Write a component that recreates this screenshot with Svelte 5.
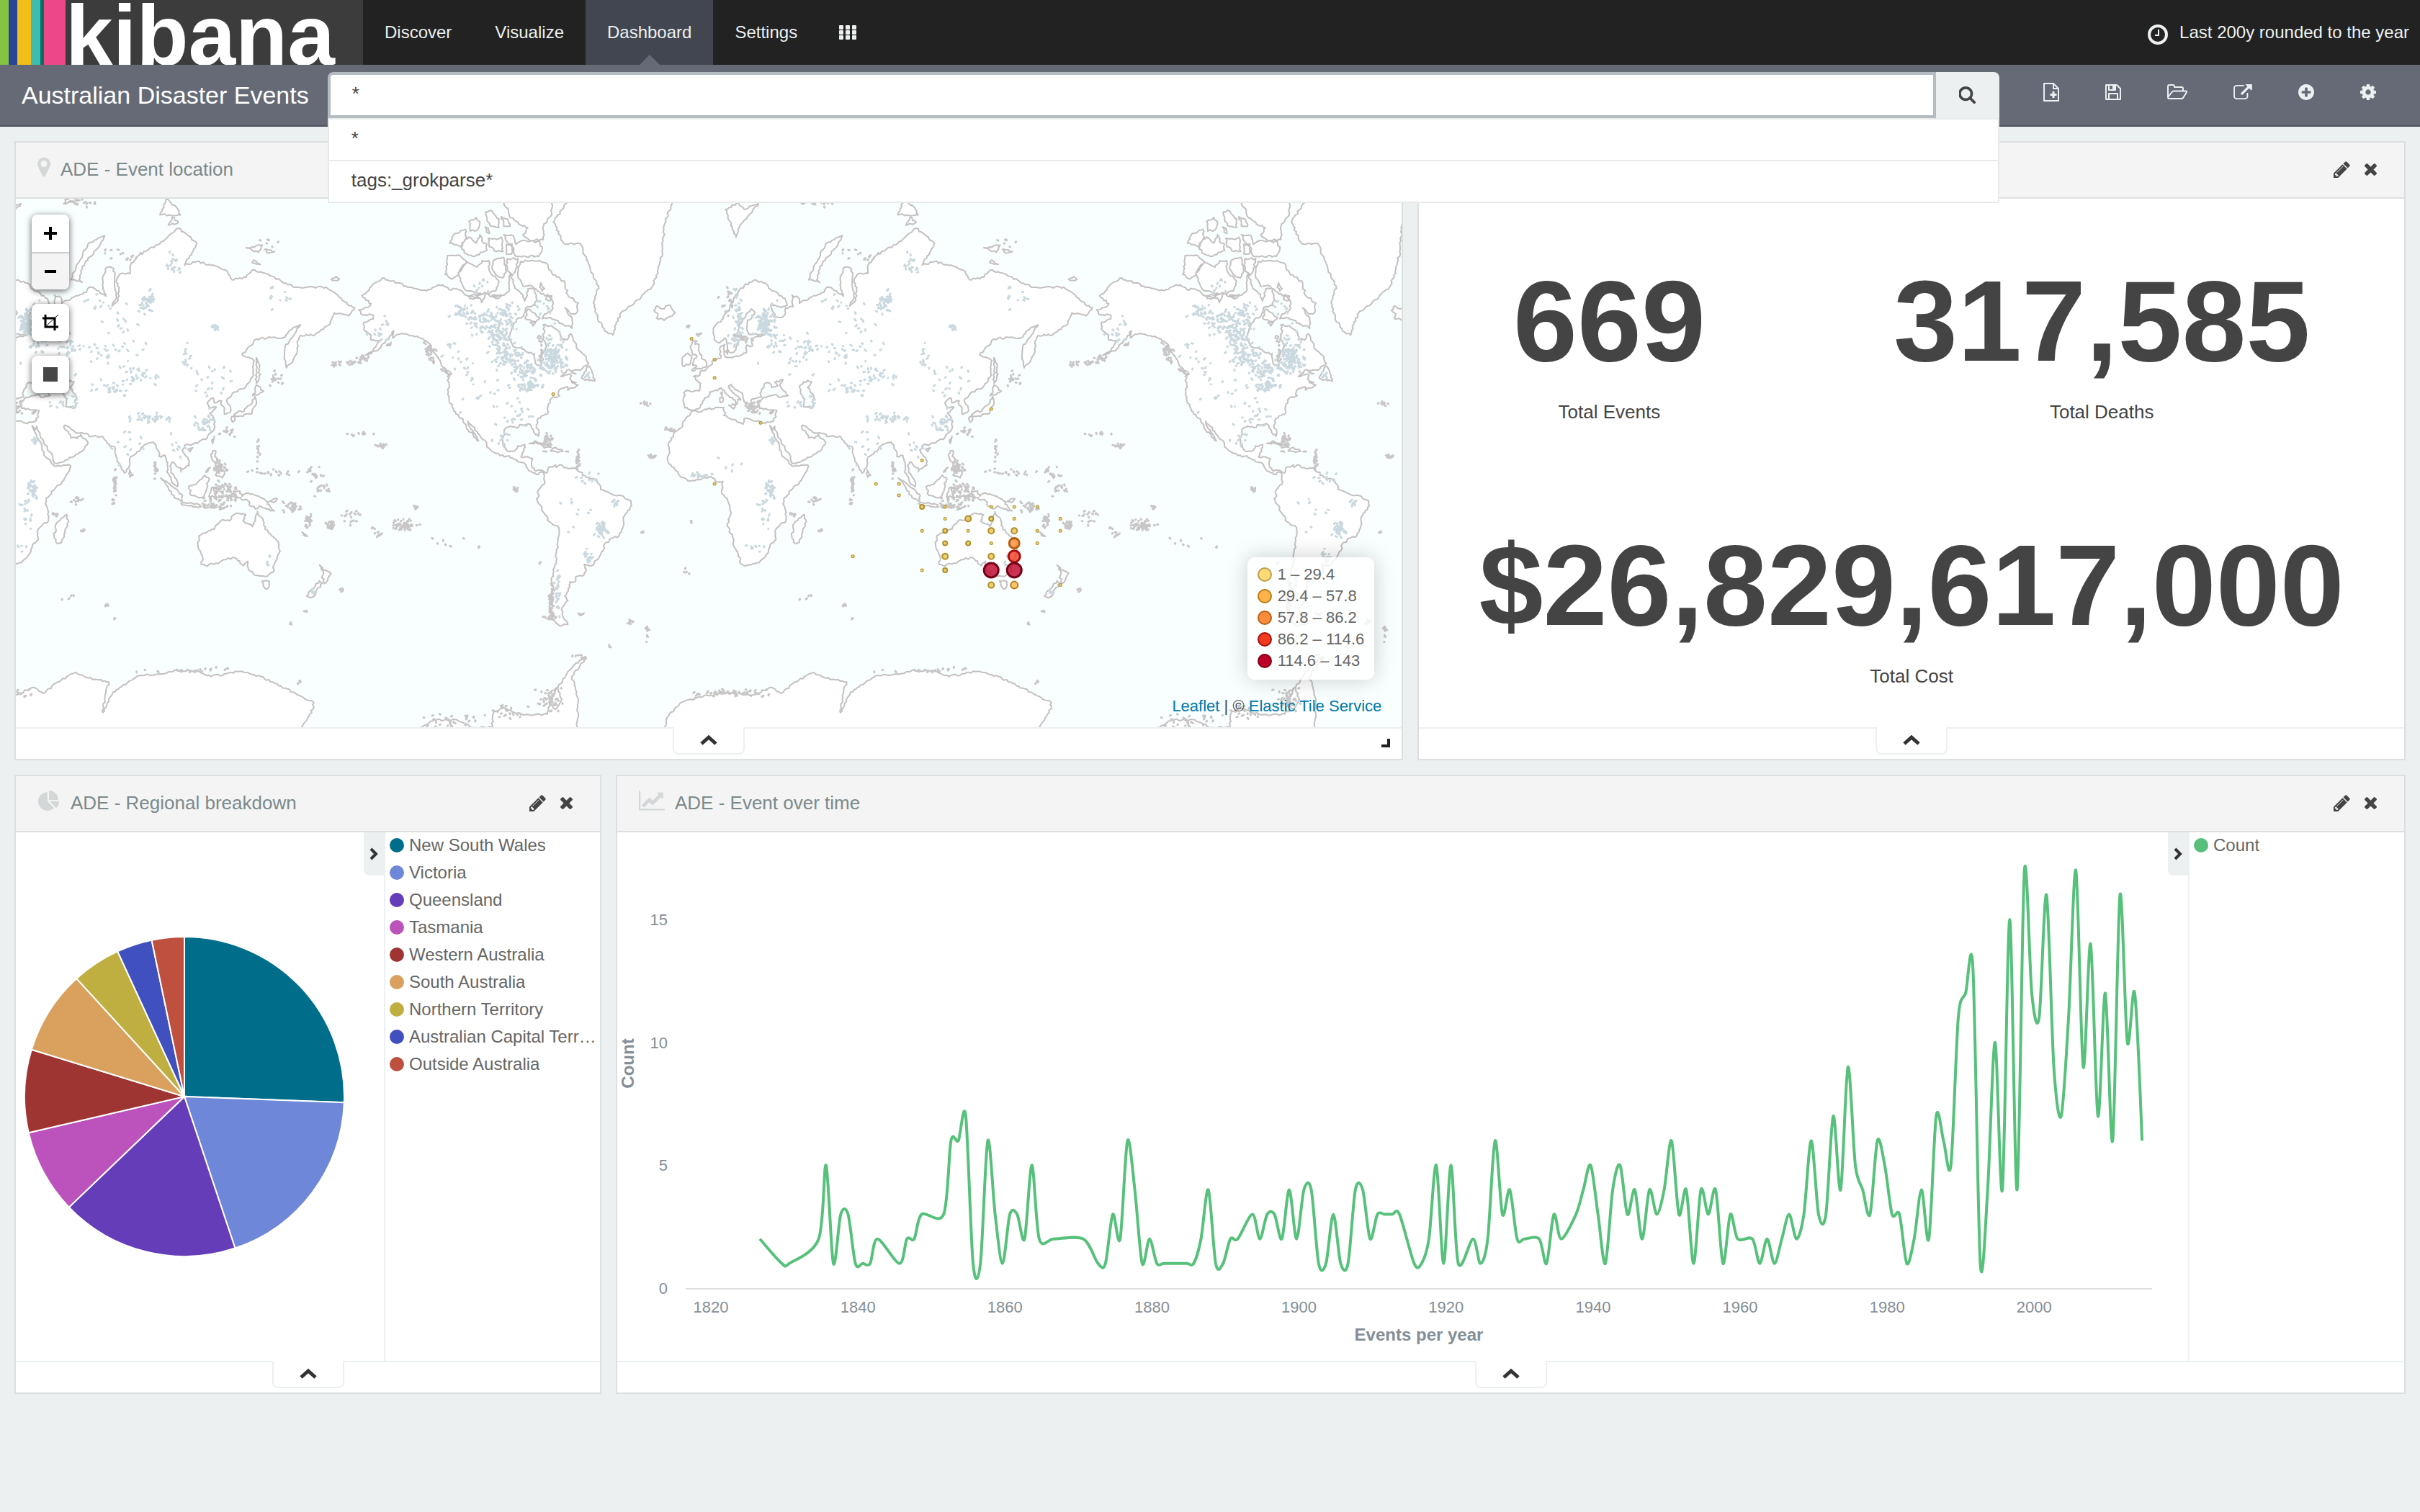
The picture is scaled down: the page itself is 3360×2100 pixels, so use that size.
<script>
  const icons = {
    search: { box: '128 128 1664 1664', d: 'M1216 832q0-185-131.5-316.5t-316.5-131.5-316.5 131.5-131.5 316.5 131.5 316.5 316.5 131.5 316.5-131.5 131.5-316.5zm512 832q0 52-38 90t-90 38q-54 0-90-38l-343-342q-179 124-399 124-143 0-273.5-55.5t-225-150-150-225-55.5-273.5 55.5-273.5 150-225 225-150 273.5-55.5 273.5 55.5 225 150 150 225 55.5 273.5q0 220-124 399l343 343q37 37 37 90z' },
    share: { box: '0 64 1792 1536', d: 'M1408 928v320q0 119-84.5 203.5t-203.5 84.5h-832q-119 0-203.5-84.5t-84.5-203.5v-832q0-119 84.5-203.5t203.5-84.5h704q14 0 23 9t9 23v64q0 14-9 23t-23 9h-704q-66 0-113 47t-47 113v832q0 66 47 113t113 47h832q66 0 113-47t47-113v-320q0-14 9-23t23-9h64q14 0 23 9t9 23zm384-864v512q0 26-19 45t-45 19-45-19l-176-176-652 652q-10 10-23 10t-23-10l-114-114q-10-10-10-23t10-23l652-652-176-176q-19-19-19-45t19-45 45-19h512q26 0 45 19t19 45z' },
    add: { box: '128 128 1536 1536', d: 'M1344 960v-128q0-26-19-45t-45-19h-256v-256q0-26-19-45t-45-19h-128q-26 0-45 19t-19 45v256h-256q-26 0-45 19t-19 45v128q0 26 19 45t45 19h256v256q0 26 19 45t45 19h128q26 0 45-19t19-45v-256h256q26 0 45-19t19-45zm320-64q0 209-103 385.5t-279.5 279.5-385.5 103-385.5-103-279.5-279.5-103-385.5 103-385.5 279.5-279.5 385.5-103 385.5 103 279.5 279.5 103 385.5z' },
    cog: { box: '128 128 1536 1536', d: 'M1152 896q0-106-75-181t-181-75-181 75-75 181 75 181 181 75 181-75 75-181zm512-109v222q0 12-8 23t-20 13l-185 28q-19 54-39 91 35 50 107 138 10 12 10 25t-9 23q-27 37-99 108t-94 71q-12 0-26-9l-138-108q-44 23-91 38-16 136-29 186-7 28-36 28h-222q-14 0-24.5-8.5t-11.5-21.5l-28-184q-49-16-90-37l-141 107q-10 9-25 9-14 0-25-11-126-114-165-168-7-10-7-23 0-12 8-23 15-21 51-66.5t54-70.5q-27-50-41-99l-183-27q-13-2-21-12.5t-8-23.5v-222q0-12 8-23t19-13l186-28q14-46 39-92-40-57-107-138-10-12-10-24 0-10 9-23 26-36 98.5-107.5t94.5-71.5q13 0 26 10l138 107q44-23 91-38 16-136 29-186 7-28 36-28h222q14 0 24.5 8.5t11.5 21.5l28 184q49 16 90 37l142-107q9-9 24-9 13 0 25 10 129 119 165 170 7 8 7 22 0 12-8 23-15 21-51 66.5t-54 70.5q26 50 41 98l183 28q13 2 21 12.5t8 23.5z' },
    pin: { box: '384 128 1024 1536', d: 'M1152 640q0-106-75-181t-181-75-181 75-75 181 75 181 181 75 181-75 75-181zm256 0q0 109-33 179l-364 774q-16 33-47.5 52t-67.5 19-67.5-19-46.5-52l-365-774q-33-70-33-179 0-212 150-362t362-150 362 150 150 362z' },
    pencil: { box: '128 128 1536 1536', d: 'M491 1536l91-91-235-235-91 91v107h128v128h107zm523-928q0-22-22-22-10 0-17 7l-542 542q-7 7-7 17 0 22 22 22 10 0 17-7l542-542q7-7 7-17zm-54-192l416 416-832 832h-416v-416zm683 96q0 53-37 90l-166 166-416-416 166-165q36-38 90-38 53 0 91 38l235 234q37 39 37 91z' },
    times: { box: '300 364 1190 1190', d: 'M1490 1322q0 40-28 68l-136 136q-28 28-68 28t-68-28l-294-294-294 294q-28 28-68 28t-68-28l-136-136q-28-28-28-68t28-68l294-294-294-294q-28-28-28-68t28-68l136-136q28-28 68-28t68 28l294 294 294-294q28-28 68-28t68 28l136 136q28 28 28 68t-28 68l-294 294 294 294q28 28 28 68z' },
    pie: { box: '0 0 1792 1664', d: 'M768 890l546 546q-106 108-247.5 168t-298.5 60q-209 0-385.5-103t-279.5-279.5-103-385.5 103-385.5 279.5-279.5 385.5-103v762zm187 6h773q0 157-60 298.5t-168 247.5zm709-128h-768v-768q209 0 385.5 103t279.5 279.5 103 385.5z' },
    line: { box: '0 128 2048 1536', d: 'M2048 1536v128h-2048v-1536h128v1408h1920zm-128-1248v435q0 21-19.5 29.5t-35.5-7.5l-121-121-633 633q-10 10-23 10t-23-10l-233-233-416 416-192-192 585-585q10-10 23-10t23 10l233 233 464-464-121-121q-16-16-7.5-35.5t29.5-19.5h435q14 0 23 9t9 23z' },
  };

  const savedQueries = ['*', 'tags:_grokparse*'];
  let query = $state('*');

  // Seeded generator keeps the drawn coast and lakes stable between renders.
  function random(seed) {
    let s = seed;
    return () => {
      s = (s * 1664525 + 1013904223) % 4294967296;
      return s / 4294967296;
    };
  }

  // Web Mercator, 1024 units for one turn of the globe.
  const WORLD = 1024;
  const project = (lon, lat) => [
    976 + (lon * WORLD) / 360,
    680 - (WORLD / (2 * Math.PI)) * Math.log(Math.tan(Math.PI / 4 + (lat * Math.PI) / 360)),
  ];

  const coasts = [
    // The Americas
    '-156.5,71.3 -152,70.8 -145,70 -141,69.6 -135,69.2 -130,70 -127,70.2 -124,69.4 -120,69.5 -115,68.3 -114,67.8 -109,67.9 -108,67 -106,68.7 -101,67.8 -97,68.4 -95,69 -94,71.9 -92,70 -91,69.4 -88,68.5 -87,67.3 -85.5,69.5 -82,69.5 -81.5,68 -82,66.5 -86,66.2 -88,64.2 -91,63.6 -93.5,61.5 -94.7,59.5 -94.5,58.7 -92.5,57 -89,56.8 -85,55.3 -82.3,55.1 -82,53 -81,51.8 -79,51.4 -79.5,53.5 -79.3,54.8 -77,56 -76.6,57.5 -78.5,59 -77.5,60.5 -78,62.4 -74,62.2 -71,61.2 -69.7,60 -69.5,58.8 -66.5,58.8 -64.5,60.3 -62.5,58.2 -61.5,56.5 -58,54.8 -57,53.5 -55.8,52.3 -58.5,51.3 -60,50.2 -66.5,50.2 -69.5,48.3 -65,49.1 -64.3,48.5 -65,47.5 -64,46.2 -61,45.4 -64,44.4 -66,43.6 -66,44.8 -68,44.4 -70.3,43.6 -70.8,42 -70,41.7 -74,40.6 -75.5,38.5 -76,37 -75.6,35.2 -78,34 -81,32 -81.4,30 -80,27 -80.4,25.2 -81.8,26 -82.8,28 -84,30 -86,30.4 -89.5,30.2 -90,29.1 -94,29.6 -97,28 -97.5,25 -97.8,22.3 -96.2,19.2 -94.5,18.2 -91.8,18.5 -90.5,20.8 -87,21.5 -87.5,19.5 -88.3,17.5 -88.9,15.8 -85.5,15.9 -83.2,15 -83.7,12 -83.5,10.8 -81.5,9 -79.7,9.5 -77.4,8.5 -76.5,8 -75.5,10.6 -72,12 -71.7,10.8 -70,12 -68,10.7 -64,10.5 -62,10.7 -60,8.5 -57,6 -52,5 -50,1.5 -50,0 -48,-0.7 -44,-2.5 -40,-2.9 -37,-4.8 -35.2,-5.5 -34.9,-8 -37,-11 -39,-13.5 -39,-17.5 -41,-22 -44,-23 -48,-25.5 -48.7,-28.5 -52,-32.5 -54.5,-34.8 -58,-34.3 -57,-36.3 -58,-38.3 -62,-39 -62.5,-41 -65,-41 -65,-43 -67.5,-46 -66,-47.5 -69,-50.5 -68.4,-52.5 -66,-54.8 -70,-55.2 -73,-53.5 -75,-50 -74.5,-47 -75.5,-46 -73,-44 -73.8,-41 -73.3,-38 -71.7,-33 -71.5,-29 -70.3,-22 -70.3,-18.3 -75,-15.5 -77.5,-11.5 -80,-7 -81.3,-4.5 -80,-3 -80.8,-1 -79,1.5 -77.2,3.8 -77.5,6.5 -78,8.3 -80,8.2 -80.3,7.4 -83,8.2 -85.5,10 -87.5,13 -92,14.5 -94.5,16.2 -97,15.8 -102,17.9 -105.5,20.4 -105.7,22.5 -109,25.6 -112.5,29.5 -114.7,31.7 -114.5,30 -111,25.5 -109.5,23.1 -110.3,23.3 -112.2,26 -114.8,28 -115.8,30.3 -117.2,32.6 -120.5,34.5 -122.5,37.5 -124,40.3 -124.3,43 -124,46.3 -124.7,48.3 -122.8,49 -127.5,51.5 -130.3,54.8 -134,58 -139.5,59.7 -144,60.1 -148,60.2 -151.5,59.3 -151,61 -154,59 -158,56.5 -162,55.1 -164.8,54.7 -161,56 -157.5,58.7 -162,58.7 -162,60 -165,61 -165.5,63 -161,63.7 -161,64.5 -166,64.5 -168,65.6 -163,66.2 -162,66.8 -166.5,68.3 -163,69.3 -160,70.5',
    '-59.3,47.7 -55.5,46.9 -53,46.7 -53.5,48.6 -55.6,51.5 -57,50.8', '-123.5,48.4 -128,50.6 -125,50', '-131.5,52.2 -133,54 -131.7,54',
    '-64.3,49.8 -62,49.1 -64,49.4', '-64,46.7 -62,46.2 -63.5,46.3', '-152.3,58.2 -154.5,57.3 -152.5,57.4',
    // Greenland, Iceland, Caribbean, Falklands
    '-73,78.3 -68,76 -60,76 -55,72.5 -51,70 -53.5,67 -51.5,64 -48,61 -44,60 -42.5,62.5 -40,65 -34,66.7 -25,69.8 -22,72 -20,75 -19,78 -12,81.5 -30,83.5 -60,82 -65,80.5',
    '-24,65.5 -22.5,66.4 -20,65.8 -16,66.5 -13.6,65 -15,64.3 -19,63.4 -22.7,63.9 -22,64.8',
    '-84.9,21.9 -82,23.1 -77,21.5 -74.2,20.2 -77.5,19.9 -78,20.8 -82,22.3', '-74.4,18.5 -73,19.9 -69,19.2 -68.4,18.3 -71,17.9',
    '-78.2,18.3 -76.3,18 -77,18.5', '-67.2,18.2 -65.7,18.1 -66,18.5', '-61,-51.5 -58,-51.5 -60,-52.2',
    // Europe, Asia and Africa
    '-9,37 -9.4,38.8 -8.8,43.2 -1.8,43.4 -1.2,46 -4.7,48.3 -1.5,48.7 -1.5,49.7 1.6,50.5 4,51.8 5,53.3 8.5,53.8 8.2,56.8 10.5,57.6 10.3,55.5 10.8,54.2 14,54 18.5,54.7 21,55.3 21.5,57.5 24,57.2 23.5,59.2 28,59.6 29.8,60 25,60.3 22.5,60.2 21.3,61.5 21.5,63 25.3,65 23.5,65.8 21,64.7 17.5,62 17.3,60.7 18.8,59.8 16.5,57.5 16,56.2 14.2,55.4 12.9,55.5 11.3,59 10.5,59.3 8,58 5.5,58.8 5,61.5 9,63.5 13,66 16,68.5 20,70 25.5,71 31,70.3 33,69.4 40,67.8 41,66.5 38,66.1 33,66.6 35,64.3 37.5,64 40,64.6 40.3,66 44,66.2 43.5,68.4 46.5,68 47,66.9 54,68.3 59,68.9 60.5,69.8 65,69.2 68.5,68.2 67,69.5 67,71.5 69,72.9 72.5,72.7 72.8,70 73.8,68 71.5,66.3 74.5,67.5 75,69 73.8,71 76,72 80.5,72 81,73.5 87,75 95,76 104,77.7 113,76 107,73.2 113,73.7 123,73 127,72.5 130,71 137,71.4 140,72.5 150,71.5 160,69.8 170,69.8 176,69.8 180,68.9 185,67.2 190,66 187,64.4 180,65 178,62.6 170.5,60 163.5,59.9 162,57.8 162,56 159.8,53 156.7,51 155.7,55 156,57 161,60.5 163.5,62.4 160,61.8 155,59.3 149,59.4 142,59 135,54.8 141,53 140.4,50 140,48 135.5,44 131.5,43 130,42 127.5,39.8 129.4,37 129,35.2 126.4,34.5 126.5,37 125,38 125,39.7 121.5,39 121,40.8 118,39 119,37.3 122.5,37.3 119.3,35 121.8,31.5 121.5,28.5 118,24.5 113.5,22.2 110,21.2 108,21.6 105.8,19 108.5,15.5 109.2,11.8 106.7,10.2 105,8.7 105,10.5 102.5,12 101,13.4 99.8,11.5 100.3,8.3 103,5 103.5,1.4 101.3,2.8 100.3,6 98.3,8.5 98.6,12 97.5,16.5 94.5,16 94.3,18.5 91.8,22.5 88.5,21.7 86.8,20.8 82.3,16.7 80.2,15 80,11.5 77.6,8.1 76,11 73.5,16 72.8,20.5 70.5,20.8 69,22.4 66.8,25.2 61.5,25.1 57,26.8 54,26.6 50.8,29 48.5,30 48,29.5 50.3,26.5 51.5,24.5 54.5,24.2 56.3,26 59.8,22.4 57.7,19 55,17.2 52,15.6 45,12.7 43.4,12.8 42.5,16.5 39,21.3 35,28.2 34.9,29.5 34,28 32.6,29.8 33.5,27.8 35.5,24 37.3,21 37.4,18.8 39.5,15.5 43,12 43.4,11.4 51.2,11.9 50.8,9.3 48,4.5 43,-0.3 39.5,-4 39,-7 40.6,-11 40.5,-15 36.5,-18 35,-20 35.5,-23.8 32.7,-26 32,-29 28,-32.8 25.5,-34 20,-34.8 18.3,-34 18,-31.5 15.2,-27 14.4,-22.5 11.8,-17.5 13.7,-11.5 12.2,-6 9,-1 9.7,4 6,4.3 4,6.4 -2,4.8 -7.5,4.4 -11.5,6.9 -13.3,9.2 -16.7,12.5 -17.4,14.7 -16.3,18 -17,21 -14.5,26 -10,29.5 -9.7,31.5 -6.5,34 -5.5,35.8 -2,35.2 1,36.5 10,37.2 11,35 10.2,34 15,32.3 19.5,30.4 20,32.6 23,32.5 29,30.9 32.3,31.2 34.5,31.8 36,36 33,36.2 30.5,36.8 27.5,36.8 26.3,39.3 29,40.6 31.5,41.3 35,42 38,41 41.5,41.7 38,44.5 37.5,45.3 39,47.2 35,46.3 36.5,45.2 33.5,44.5 32.6,46 30.5,46.2 28.7,44 27.8,42.5 28.5,41.2 26,40.7 23.7,40.3 24,38 23,36.6 21.5,37 19.4,41 19.4,42 15,44.5 13.7,45.6 12.4,45 13.6,43.5 16,41.8 18.4,40 17,40.4 16.5,38.5 15.7,38 15.7,40 12.5,41.5 10.3,43.5 8.8,44.4 5,43.3 3.2,43 3,41.8 -0.3,39.5 -2,36.8 -5.4,36.1',
    // European islands
    '-5.5,50.1 -1,50.7 1.3,51.2 1.6,52.7 0,53.5 -1.5,55 -2,57.5 -4,57.7 -3,58.6 -5,58.6 -6,56.5 -5,54.8 -3,54.5 -4.5,53.2 -5,51.8 -3,51.4',
    '-6.2,52.2 -10,51.6 -10,54.2 -7.5,55.3 -5.7,54.5', '12.5,38 15.5,38.2 15,36.7', '8.3,40.9 9.7,41 9.5,39.2 8.4,39.1', '8.7,42.5 9.4,43 9.3,41.5',
    '23.6,35.5 26.2,35.2 24,35.1', '32.4,35 34.4,35.6 33,34.6', '11,55.7 12.5,56 12,55',
    // Arctic Russia and Svalbard
    '51.5,71 54,73 60,76 68,76.9 66,76 57,73 55.5,71 57,70.6', '11,79.5 16,76.7 18,78 20,78.5 27,80 20,79.5 17,80.1',
    '95,79 105,79 103,79.7 98,80.4', '99,78 104,78.3 101,78.8', '137,75.5 145,75.8 143,74.9', '146,75.3 151,75 147,74.9', '140,73.5 144,73.3 141,73.9',
    '178.5,71.1 181,71.5 182.5,71.1 180,70.9', '48,80 56,80.3 50,80.6',
    // East Asia and Oceania
    '131,34 135.5,33.6 137,34.6 140,35 141,37.5 142,39.5 141.3,41.3 140,40 139.5,38.5 137,37 136,35.7 133,35.5',
    '140.2,41.6 143,42 145.5,43.3 142,45.4 141.5,43.3', '130,33.5 130.3,31.2 131.5,32 131.5,33.6',
    '142,54 143.5,52 143,49.5 144,49 142.8,46.6 142,46 142,50', '121.5,25.2 120.7,22 120.2,23.5', '108.7,19.3 111,20 109.7,18.2',
    '120.6,18.5 122.2,18.4 121.6,16 124,12.8 120.6,14 120,16', '122,7 123.5,8.6 125.5,9.7 126.5,7.5 125.5,5.7 124,6.5', '122,11.8 124,11 123,9.2 122.4,10.3', '124.4,12.5 125.5,12 125,10.2', '117.3,8.4 119.5,10.8 119,10.2',
    '95.3,5.6 98,4 104,-1 106,-3 105.8,-5.8 102,-4 98.7,1.5', '105.2,-6.8 108.5,-6.7 114.5,-7.5 114.4,-8.6 108,-7.8',
    '109,1.5 111.5,2.5 113,3.2 116.8,7 119,5.2 117.7,3 118,1 116,-3.7 114.5,-4 110.2,-2.8', '119.5,-5.5 119,-3 120,0.8 125,1.5 124,0.4 121,0.4 121.5,-1 123.3,-1 121.5,-2 122.5,-5 120.4,-3',
    '127.5,1.8 128.5,1 128,-0.8', '127,-3.3 130.5,-3.3 128,-3.1', '124,-9.9 127,-8.5 125,-9.4', '119.8,-8.5 122.8,-8.4 121,-8.9', '116,-8.3 118.8,-8.6 117,-9',
    '131,-0.8 134,-0.8 135,-3.3 138,-1.7 141,-2.6 145,-4.3 147.8,-6 147.3,-7 150.8,-10.3 147,-9.5 143.5,-8 142.5,-9.2 139,-8 138,-5.5 133,-4 132,-2.5',
    '148.5,-5.7 151.5,-4.3 152.2,-4.5 150.5,-6.2', '154.8,-5.6 155.8,-6.7 155,-6.4', '159.7,-8.5 161,-9.4 159.8,-9.6', '164.2,-20.2 167,-22.3 165,-21.6',
    '80,9.7 81.8,7 80.5,6 79.8,8', '49.3,-12 50.4,-15.5 47,-25 45,-25.5 43.3,-22 44.5,-16.2',
    '142.5,-10.7 145.3,-15 146.3,-19 149.5,-22 153,-25.5 153.6,-28.7 151,-33.7 150,-37.4 146.5,-39 143.6,-38.8 140.5,-38 138,-35.6 137.8,-33 135.8,-34.8 131.5,-31.5 126,-32.3 123.5,-33.9 120,-33.9 118,-35 115.2,-34.3 115.8,-31.5 113.5,-26 114,-22 117,-20.7 121.5,-19 122.5,-17 125,-14.7 129,-15 130.8,-12.3 132.5,-11.4 136.8,-12.2 135.5,-15 140,-17.7 141.5,-15 141.7,-12.5',
    '144.7,-40.8 148.3,-40.9 148,-43 146.5,-43.6 145.3,-42.3', '172.8,-34.5 175.5,-36.6 178.4,-37.8 177,-39.5 175.2,-41.6 175,-40 173.9,-39.4 174.8,-37.8', '172.7,-40.6 174.2,-41.5 171,-44.3 170.5,-45.9 168.4,-46.6 166.5,-46 170,-43.2',
    // Antarctica
    '-20,-76 -17,-73.5 -11,-71.5 0,-70.5 8,-70 15,-70 24,-70.3 33,-69 38,-70 45,-68 54,-66.2 60,-67.3 70,-68 68.5,-70 67,-73 72,-69.8 78,-68.5 84,-66.9 95,-66.5 102,-65.8 113,-66 120,-67 134,-66 144,-67 151,-68.3 160,-69.8 165,-70.7 170,-71.5 169,-73 164,-75 162,-77 100,-80 -20,-80',
    '-146,-76.5 -138,-75 -131,-74 -120,-74 -113,-75 -103,-75 -102,-72.8 -97,-72.3 -92,-73 -85,-73.3 -76,-73.2 -74,-71 -72,-69.5 -67,-66.8 -62,-64.3 -57,-63.2 -60,-64.8 -64,-67 -61.5,-70.5 -61,-73 -62,-76 -62,-80 -146,-80',
    '-75,-70 -71,-69 -69,-71 -72,-72.5 -75,-71.5',
  ];
  const inlandSeas = ['47,45 51,47 53,46.5 51,44.5 54,41.5 53.5,37 49,37.5 49.5,40.5 47.5,43'];

  // Canadian Arctic islands on a finer local grid, three steps to one map unit.
  const arcticIslands = [
    '255,238 300,235 335,262 305,300 300,320 275,335 245,315 255,275',
    '335,265 380,285 400,258 428,258 430,300 470,345 455,385 420,395 380,395 330,380 315,350 300,310',
    '450,255 490,245 500,300 485,330 455,315 440,290', '505,250 550,250 540,290 525,320 505,300',
    '560,262 600,258 640,258 670,270 690,310 745,350 755,400 800,435 795,475 770,480 745,455 775,500 775,540 730,520 685,495 650,500 660,480 690,465 695,430 670,405 640,390 610,365 570,365 550,330 550,290',
    '315,185 345,160 375,185 390,150 405,185 420,190 420,215 370,240 335,230 315,210',
    '265,185 285,145 330,128 335,160 310,200', '425,165 460,170 480,160 487,220 460,220 430,200', '500,190 525,190 522,230 500,230',
    '490,150 530,155 540,190 565,175 640,180 650,210 635,240 540,240 525,200 500,175',
    '490,20 510,50 520,80 560,110 590,120 570,150 600,175 655,170 655,115 690,60 690,20 720,-20 500,-20',
    '415,55 440,50 470,85 470,120 440,115 420,90', '480,75 505,85 515,115 490,115', '345,95 375,78 390,95 380,130 350,135', '412,118 425,122 430,145 418,140',
    '590,460 640,495 620,520 600,505 580,500', '635,570 645,575 640,585 630,580', '345,405 395,400 370,412', '440,402 480,400 460,410',
    '645,350 660,375 650,385 640,370', '670,400 690,405 685,425 665,420', '600,515 620,512 612,530',
  ];

  const rnd = random(7);
  const fromGeo = (text) => text.split(' ').map((p) => project(...p.split(',').map(Number)));
  const fromGrid = (text) => text.split(' ').map((p) => p.split(',').map(Number)).map(([x, y]) => [536 + x / 3, 276 + y / 3]);
  function outline(pts) {
    const out = [];
    pts.forEach((a, i) => {
      const b = pts[(i + 1) % pts.length];
      const dx = b[0] - a[0];
      const dy = b[1] - a[1];
      const len = Math.hypot(dx, dy);
      const steps = len > 200 ? 1 : Math.max(1, Math.round(len / 3));
      for (let k = 0; k < steps; k++) {
        const t = k / steps;
        const off = k ? (rnd() - 0.5) * 2.8 : 0;
        out.push(`${(a[0] + dx * t - (dy / len) * off).toFixed(1)} ${(a[1] + dy * t + (dx / len) * off).toFixed(1)}`);
      }
    });
    return `M${out.join('L')}Z`;
  }
  const landPath = coasts.map((c) => outline(fromGeo(c))).join('');
  const arcticPath = arcticIslands.map((c) => outline(fromGrid(c))).join('');
  const seaPath = inlandSeas.map((c) => outline(fromGeo(c))).join('');

  // Scattered marks: centre, spread and number of each group.
  function scatter(groups, size) {
    let d = '';
    for (const [lon, lat, sx, sy, n] of groups) {
      for (let i = 0; i < n; i++) {
        const gx = rnd() + rnd() + rnd() - 1.5;
        const gy = rnd() + rnd() + rnd() - 1.5;
        const [x, y] = project(lon + gx * sx, lat + gy * sy);
        d += `M${x.toFixed(1)} ${y.toFixed(1)}l${((rnd() - 0.5) * size).toFixed(1)} ${((rnd() - 0.5) * size).toFixed(1)}`;
      }
    }
    return d;
  }
  const lakePath = scatter([
    [-117, 65, 6, 2, 30], [-108, 63, 6, 2.5, 50], [-100, 59, 6, 4, 70], [-97, 64, 6, 3, 50], [-94, 54, 7, 3, 60], [-87, 50, 6, 3, 46], [-72, 54, 5, 4, 80], [-76, 51, 6, 3, 40], [-84, 45, 5, 2, 46], [-74, 58, 3, 4, 16],
    [-105, 42, 15, 8, 20], [-90, 34, 10, 5, 18], [-120, 56, 8, 4, 8], [-157, 61, 6, 3, 18], [-114, 50, 6, 4, 10], [-99, 24, 6, 5, 12], [-108, 70, 4, 1, 10], [-78, 66, 3, 2, 8], [-56, 48.5, 1.5, 1, 6],
    [30, 63, 5, 3.5, 100], [17, 64, 3, 5, 40], [15, 59, 3, 2, 18], [35, 58, 6, 3, 20], [50, 57, 8, 3, 24], [42, 52, 12, 4, 12],
    [89, 67, 4, 2, 36], [101, 73, 4, 1.5, 18], [72, 55, 12, 4, 30], [75, 62, 10, 4, 12], [108, 54, 2, 4, 14], [85, 48, 14, 4, 30], [64, 66, 6, 3, 10], [120, 50, 14, 5, 12], [122, 62, 1.5, 1, 12], [152, 68, 8, 2, 10],
    [90, 33, 10, 2, 36], [117, 31, 4, 3, 32], [80, 22, 7, 7, 12], [72, 44, 9, 2, 20], [48, 38, 7, 4, 14], [104, 20, 5, 7, 8], [118, 42, 8, 5, 10],
    [33, 0, 2.5, 4, 32], [30, -12, 3, 7, 16], [27, -28, 5, 4, 8], [34, 23, 1, 2, 8], [-2, 7, 5, 1.5, 16], [12, 12, 9, 3, 5],
    [-50, -19, 3, 3, 42], [-43, -6, 1.5, 1.5, 10], [-58, 6, 6, 3, 10], [-57, -31, 3, 3, 14], [-71, -44, 1.5, 7, 24], [-64, -14, 9, 9, 9], [170, -45, 1.5, 1, 8], [147, -34, 2, 3, 5],
  ], 4);
  const isletPath = scatter([
    [-180, 52, 3, 0.5, 10], [-172, 52.6, 6, 0.6, 18], [-166, 54, 4, 0.8, 14], [152, 47, 4, 3, 16], [128, 27, 3, 2, 12], [143, 18, 1, 6, 10], [-157, 21, 4, 1, 14], [-168, 26, 8, 1, 8],
    [150, 8, 12, 2, 18], [170, 8, 4, 4, 18], [174, 0, 4, 4, 14], [160, -9, 5, 3, 22], [167, -15, 1.5, 4, 26], [178, -17, 2, 2, 28], [-172, -14, 6, 6, 16], [-147, -17, 7, 3, 52], [-140, -9, 1, 1, 8], [-158, -20, 5, 4, 10],
    [73, 3, 0.6, 6, 28], [55, -5, 3, 3, 12], [57, -20, 2, 1, 8], [44, -12, 2, 1, 8], [72, -7, 1, 2, 6], [-25, 16, 2, 1, 14], [-16, 28, 3, 1, 12], [-28, 38.5, 4, 1, 10], [-91, 0, 1.5, 1, 10],
    [-61, 14, 0.8, 4, 30], [-76, 24, 3, 3, 34], [127, 0, 5, 4, 30], [122, -8, 8, 1, 26], [124, 11, 3, 3, 30], [125, -4, 8, 2, 28], [93, 10, 0.8, 4, 14], [-133, 56, 3, 2, 30], [-74, -48, 1, 5, 46], [-74, -53, 3, 1, 18],
    [-79, 56, 1, 3, 14], [-36, -54, 2, 1, 6], [-27, -58, 1, 3, 8], [69, -49, 1, 0.5, 8], [73, -53, 0.5, 0.3, 3], [52, -46, 6, 1, 5], [166, -51, 1, 1, 3], [-176, -44, 1, 1, 4], [159, -54.5, 0.5, 0.5, 3],
    [24, 37.5, 3, 2, 26], [20, 59, 4, 1, 16], [-7, 62, 1, 0.5, 5], [-2, 60, 1, 0.6, 6], [12, 67, 3, 3, 18], [78, 75, 12, 2, 14], [55, 80.2, 8, 0.5, 20], [150, 76, 8, 1, 6], [-75, -71, 6, 2, 40], [-120, -74, 16, 1, 30], [-95, -72.6, 8, 1, 20], [10, -70, 24, 0.6, 50], [110, -65.8, 24, 0.6, 20],
    [-60, -63, 4, 1, 10], [-45, -60.6, 1, 0.4, 4], [163, -68, 1, 1, 4], [-130, -24, 10, 3, 6], [-109, -27, 1, 1, 2], [-80, -33.6, 1, 1, 2], [-30, -20, 1, 1, 2], [-8, -37, 2, 2, 4], [-5, -16, 1, 1, 2],
  ], 3);

  // Grid cell (column, row), radius and count band of each bubble.
  const bubbles = [
    [-1, 10, 2, 0], [0, 9, 2, 0], [0, 8, 2, 0], [-7, 7, 2, 0], [2, 5, 2, 0], [12, 6, 2, 0], [9, 2, 2, 0], [0, 0, 2, 0], [7, 0, 2, 0], [8, 0, 2, 0], [8, -1, 2, 0], [6, -6, 2, 0],
    [9, -2, 3, 0], [10, -2, 2, 0], [12, -2, 2, 0], [13, -2, 2, 0], [14, -2, 2, 0],
    [10, -3, 2, 0], [11, -3, 4, 0], [12, -3, 3, 0], [13, -3, 2, 0], [15, -3, 2, 0],
    [9, -4, 2, 0], [10, -4, 3, 0], [11, -4, 2, 0], [12, -4, 4, 0], [13, -4, 4, 0], [14, -4, 2, 0], [15, -4, 2, 0],
    [10, -5, 3, 0], [11, -5, 3, 0], [12, -5, 2, 0], [13, -5, 7, 2], [14, -5, 2, 0],
    [10, -6, 4, 0], [12, -6, 4, 0], [13, -6, 8, 3],
    [9, -7, 2, 0], [10, -7, 3, 0], [12, -7, 10, 4], [13, -7, 10, 4],
    [12, -8, 4, 0], [13, -8, 5, 1], [15, -8, 2, 0],
  ].map(([i, j, r, band]) => {
    const [x, y] = project(5.625 + 11.25 * i, 2.8125 + 5.625 * j);
    return { x, y, r, band };
  });
  const bands = ['1 – 29.4', '29.4 – 57.8', '57.8 – 86.2', '86.2 – 114.6', '114.6 – 143'];

  const regions = [
    ['New South Wales', '#006e8a', 92.1], ['Victoria', '#6f87d8', 161.5], ['Queensland', '#663db8', 226.2], ['Tasmania', '#bc52bc', 256.9], ['Western Australia', '#9e3533', 287.1],
    ['South Australia', '#daa05d', 317.6], ['Northern Territory', '#bfaf40', 335.3], ['Australian Capital Terr…', '#4050bf', 348.2], ['Outside Australia', '#bf5040', 360],
  ];
  const rim = (deg) => `${222 * Math.sin((deg * Math.PI) / 180)} ${-222 * Math.cos((deg * Math.PI) / 180)}`;
  const slices = regions.map(([name, color, end], i) => ({
    name,
    color,
    d: `M0 0L${rim(i ? regions[i - 1][2] : 0)}A222 222 0 0 1 ${rim(end)}Z`,
  }));

  // Years since 1827 and the number of events in each.
  const events = '0:2 3:1 4:1 8:2 9:5 10:1 11:3 12:3 13:1 14:1 15:1 16:2 19:1 20:2 21:2 22:3 25:3 26:6 27:6 28:7 29:1 30:1 31:6 32:3 33:1 34:3 35:3 36:2 37:5 38:2 40:2 44:2 46:1 47:1 48:3 49:2 50:6 51:4 52:1 53:2 54:1 55:1 58:1 59:1 60:2 61:4 62:1 63:1 64:2 65:2 67:3 68:2 69:3 70:3 71:2 72:4 73:2 74:4 75:4 76:1 77:1 78:3 79:1 80:1 81:4 82:4 83:2 84:3 85:3 86:3 87:3 89:1 90:1 91:2 92:5 93:1 94:5 95:1 97:2 98:1 99:2 100:6 101:3 102:4 103:2 104:2 106:2 107:1 108:3 109:2 111:3 112:4 113:5 114:3 115:1 116:4 117:5 118:3 119:4 120:2 121:4 122:3 123:4 124:6 125:3 126:4 127:1 128:4 129:3 130:4 131:1 132:3 133:2 135:2 136:1 137:2 138:1 139:2 140:3 141:2 142:3 143:6 144:3 145:3 146:7 147:4 148:9 149:5 150:4 151:3 152:6 153:5 154:3 155:3 156:1 157:2 158:4 159:2 160:7 161:6 162:5 163:11 164:12 165:13 166:1 167:4 168:10 169:4 170:15 171:4 172:17 173:12 174:11 175:16 176:9 177:7 178:11 179:17 180:9 181:14 182:7 183:12 184:6 185:16 186:10 187:12 188:6'
    .split(' ').map((p) => p.split(':').map(Number)).map(([n, v]) => [198 + n * 10.208, 633 - v * 34.13]);
  const tangent = (i) => {
    const a = events[Math.max(0, i - 1)];
    const b = events[Math.min(events.length - 1, i + 1)];
    const edge = i === 0 || i === events.length - 1;
    return edge ? [0, 0] : [0.15 * (b[0] - a[0]), 0.15 * (b[1] - a[1])];
  };
  const eventLine = events.map((p, i) => {
    if (!i) return `M${p[0]} ${p[1]}`;
    const q = events[i - 1];
    const t0 = tangent(i - 1);
    const t1 = tangent(i);
    return `C${q[0] + t0[0]} ${q[1] + t0[1]} ${p[0] - t1[0]} ${p[1] - t1[1]} ${p[0]} ${p[1]}`;
  }).join('');
  const yearTicks = [1820, 1840, 1860, 1880, 1900, 1920, 1940, 1960, 1980, 2000];
  const countTicks = [0, 5, 10, 15];
</script>

{#snippet icon(name)}
  <svg class="icon {name}" viewBox={icons[name].box} aria-hidden="true"><path d={icons[name].d} /></svg>
{/snippet}

{#snippet header(title, name)}
  <header class="panel-head">
    {#if title}
      {@render icon(name)}
      <h2>{title}</h2>
    {/if}
    <div class="panel-actions">
      <button type="button" aria-label="Edit panel">{@render icon('pencil')}</button>
      <button type="button" aria-label="Remove panel">{@render icon('times')}</button>
    </div>
  </header>
{/snippet}

{#snippet footer(resizable)}
  <footer class="panel-foot">
    <button type="button" class="expand" aria-label="Show panel data">
      <svg class="chevron-up" viewBox="0 0 24 16" aria-hidden="true"><path d="M2 13L12 4L22 13" /></svg>
    </button>
    {#if resizable}<span class="grip"></span>{/if}
  </footer>
{/snippet}

{#snippet legendToggle()}
  <button type="button" class="legend-toggle" aria-label="Toggle legend">
    <svg viewBox="0 0 12 18" aria-hidden="true"><path d="M2 2L9 9L2 16" /></svg>
  </button>
{/snippet}

<nav class="topbar">
  <a class="logo" href="#home">
    <span class="stripes"><i class="s1"></i><i class="s2"></i><i class="s3"></i><i class="s4"></i><i class="s5"></i><i class="s6"></i></span>
    <span class="brand">kibana</span>
  </a>
  <a class="tab" href="#discover">Discover</a>
  <a class="tab" href="#visualize">Visualize</a>
  <a class="tab active" href="#dashboard" aria-current="page">Dashboard</a>
  <a class="tab" href="#settings">Settings</a>
  <button type="button" class="apps" aria-label="Apps">
    <svg viewBox="0 0 24 20" aria-hidden="true">
      {#each [0, 9, 18] as x}{#each [0, 7, 14] as y}<rect {x} {y} width="6" height="6" rx="1" />{/each}{/each}
    </svg>
  </button>
  <button type="button" class="time">
    <svg viewBox="0 0 28 28" aria-hidden="true"><circle cx="14" cy="14" r="12" /><path d="M15 7v8h-5" /></svg>
    Last 200y rounded to the year
  </button>
</nav>

<div class="localbar">
  <h1>Australian Disaster Events</h1>
  <form class="search" onsubmit={(e) => e.preventDefault()}>
    <input type="text" aria-label="Search query" bind:value={query} />
    <button type="submit" aria-label="Search">{@render icon('search')}</button>
    <ul class="history">
      {#each savedQueries as item}
        <li><a href="#query">{item}</a></li>
      {/each}
    </ul>
  </form>
  <div class="tools">
    <button type="button" aria-label="New dashboard">
      <svg class="outline tall" viewBox="0 0 22 26" aria-hidden="true"><path d="M1 1H14L21 8V25H1ZM14 1V8H21" /><path class="bold" d="M14 12v9M9.5 16.500h9" /></svg>
    </button>
    <button type="button" aria-label="Save dashboard">
      <svg class="outline" viewBox="0 0 22 22" aria-hidden="true"><path d="M1 1H16L21 6V21H1ZM5 21V13H17V21" /><path d="M5 1V8H14V1" /><path class="bold" d="M11.500 2v5" /></svg>
    </button>
    <button type="button" aria-label="Open dashboard">
      <svg class="outline wide" viewBox="0 0 28 22" aria-hidden="true"><path d="M1 18V3Q1 1 3 1H8Q10 1 10 3V4H20Q22 4 22 6V9M1 18Q1 20 3 20H20Q21 20 22 19L27 11Q27.500 9.500 26 9.500H9Q7.500 9.500 6.500 11L1 18" /></svg>
    </button>
    <button type="button" aria-label="Share dashboard">{@render icon('share')}</button>
    <button type="button" aria-label="Add visualization">{@render icon('add')}</button>
    <button type="button" aria-label="Options">{@render icon('cog')}</button>
  </div>
</div>

<main class="dashboard">
  <section class="panel span7">
    {@render header('ADE - Event location', 'pin')}
    <div class="vis map">
      <svg class="world" viewBox="22 276 1924 734" preserveAspectRatio="xMidYMid slice" role="img" aria-label="Event location map">
        <defs>
          <g id="world-tile">
            <path class="land" d={landPath} />
            <path class="land" d={arcticPath} />
            <path class="sea" d={seaPath} />
            <path class="lakes" d={lakePath} />
            <path class="islets" d={isletPath} />
          </g>
        </defs>
        <use href="#world-tile" x={-WORLD} />
        <use href="#world-tile" />
        <use href="#world-tile" x={WORLD} />
        {#each bubbles as b}
          <circle class="bubble b{b.band}" class:tiny={b.r < 3} cx={b.x} cy={b.y} r={b.r} />
        {/each}
      </svg>
      <div class="controls">
        <div class="control">
          <button type="button" aria-label="Zoom in"><svg viewBox="0 0 20 20" aria-hidden="true"><path d="M10 1v18M1 10h18" /></svg></button>
          <button type="button" class="off" aria-label="Zoom out"><svg viewBox="0 0 20 20" aria-hidden="true"><path d="M2 10h16" /></svg></button>
        </div>
        <div class="control">
          <button type="button" aria-label="Fit data bounds"><svg class="crop" viewBox="0 0 24 24" aria-hidden="true"><path d="M5 1v17h18M1 6h17v17" /><path class="thin" d="M7 16L23 1" /></svg></button>
        </div>
        <div class="control">
          <button type="button" aria-label="Draw filter"><span class="square"></span></button>
        </div>
      </div>
      <div class="corner">
        <ul class="bands">
          {#each bands as label, i}
            <li><svg viewBox="0 0 20 20" aria-hidden="true"><circle class="key k{i}" cx="10" cy="10" r="9" /></svg>{label}</li>
          {/each}
        </ul>
        <p class="credit"><a href="#leaflet">Leaflet</a> | © <a href="#tiles">Elastic Tile Service</a></p>
      </div>
    </div>
    {@render footer(true)}
  </section>

  <section class="panel span5">
    {@render header('', '')}
    <div class="vis metrics">
      <div class="metric"><strong>669</strong><span>Total Events</span></div>
      <div class="metric"><strong>317,585</strong><span>Total Deaths</span></div>
      <div class="metric"><strong>$26,829,617,000</strong><span>Total Cost</span></div>
    </div>
    {@render footer(false)}
  </section>

  <section class="panel span3">
    {@render header('ADE - Regional breakdown', 'pie')}
    <div class="vis split">
      <div class="pie-area">
        <svg viewBox="-223 -223 446 446" role="img" aria-label="Events by region">
          {#each slices as s}<path class="slice" d={s.d} fill={s.color} />{/each}
        </svg>
      </div>
      {@render legendToggle()}
      <ul class="legend">
        {#each slices as s}
          <li><svg viewBox="0 0 20 20" aria-hidden="true"><circle cx="10" cy="10" r="10" fill={s.color} /></svg><span>{s.name}</span></li>
        {/each}
      </ul>
    </div>
    {@render footer(false)}
  </section>

  <section class="panel span9">
    {@render header('ADE - Event over time', 'line')}
    <div class="vis split">
      <svg class="timeline" viewBox="0 0 2153 734" role="img" aria-label="Events per year">
        <path class="axis" d="M95 634H2131" />
        <path class="series" d={eventLine} />
        {#each countTicks as c}
          <text class="tick end" x="70" y={641 - c * 34.13}>{c}</text>
        {/each}
        {#each yearTicks as year, i}
          <text class="tick" x={130 + i * 204.15} y="667">{year}</text>
        {/each}
        <text class="axis-title" x="1113" y="706">Events per year</text>
        <text class="axis-title" transform="translate(23 321) rotate(-90)">Count</text>
      </svg>
      {@render legendToggle()}
      <ul class="legend">
        <li><svg viewBox="0 0 20 20" aria-hidden="true"><circle cx="10" cy="10" r="10" fill="#57c17b" /></svg><span>Count</span></li>
      </ul>
    </div>
    {@render footer(false)}
  </section>
</main>

<style>
  :global(body) {
    background: #ecf0f1;
    color: #444;
    font-family: "Liberation Sans", Arial, sans-serif;
    font-size: 26px;
    line-height: 36px;
  }
  button { margin: 0; padding: 0; border: 0; background: none; color: inherit; font: inherit; cursor: pointer; }
  a { color: inherit; text-decoration: none; }
  ul { margin: 0; padding: 0; list-style: none; }
  h1, h2, p { margin: 0; font-weight: 400; }
  svg { display: block; flex: none; }
  .icon { fill: currentColor; }

  .topbar { display: flex; height: 90px; background: #222; color: #ecf0f1; font-size: 24px; }
  .logo { display: flex; width: 504px; height: 90px; overflow: hidden; background: #3c3c3c; color: #fff; }
  .stripes { display: flex; flex: none; width: 91px; }
  .s1 { width: 12px; background: #85c441; }
  .s2 { width: 12px; background: #2a4597; }
  .s3 { width: 19px; background: #f2be1a; }
  .s4 { width: 13px; background: #3dbdb0; }
  .s5 { width: 5px; background: #0a6e60; }
  .s6 { width: 30px; background: #ee4787; }
  .brand { height: 90px; font-size: 118px; font-weight: 700; line-height: 98px; }
  .tab { position: relative; display: flex; align-items: center; padding: 0 30px; }
  .active { background: #414650; }
  .active::after {
    content: "";
    position: absolute;
    bottom: 0;
    left: 50%;
    margin-left: -14px;
    border: 14px solid transparent;
    border-top: 0;
    border-bottom-color: #656a76;
  }
  .apps { padding: 0 28px; }
  .apps svg { width: 24px; height: 20px; fill: currentColor; }
  .time { display: flex; align-items: center; gap: 16px; margin-left: auto; padding-right: 15px; }
  .time svg { width: 28px; height: 28px; margin-top: 6px; fill: none; stroke: currentColor; stroke-width: 4; }
  .time path { stroke-width: 2; }

  .localbar { display: flex; box-sizing: border-box; height: 86px; border-bottom: 2px solid #4f5462; background: #656a76; color: #ecf0f1; }
  h1 { padding: 0 26px 0 30px; color: #fff; font-size: 34px; line-height: 84px; white-space: nowrap; }
  .search { position: relative; display: flex; flex: 1; height: 64px; margin-top: 10px; color: #444; }
  .search input {
    box-sizing: border-box;
    flex: 1;
    min-width: 0;
    height: 64px;
    padding: 0 30px 4px;
    border: 4px solid #b4bcc2;
    border-radius: 8px 0 0 0;
    outline: 0;
    background: #fff;
    color: inherit;
    font: inherit;
  }
  .search button { display: grid; place-items: center; width: 88px; border-radius: 0 8px 0 0; background: #ecf0f1; }
  .icon.search { width: 24px; height: 24px; margin: 0; }
  .history { position: absolute; z-index: 5; top: 64px; left: 0; right: 0; box-sizing: border-box; border: 2px solid #e8eaea; border-bottom: 0; background: #fff; }
  .history li { padding: 8px 31px 12px; border-bottom: 2px solid #e8eaea; }
  .history a { display: block; }
  .tools { display: flex; padding: 0 29px; }
  .tools button { display: flex; align-items: center; padding: 0 32px 8px; }
  .tools svg { width: 22px; height: 22px; }
  .tools .tall { height: 26px; }
  .tools .wide { width: 28px; }
  .tools .share { width: 26px; height: 22px; }
  .outline { fill: none; stroke: currentColor; stroke-width: 2; stroke-linejoin: round; }
  .outline .bold { stroke-width: 3; }

  .dashboard { display: grid; grid-template-columns: repeat(12, minmax(0, 1fr)); gap: 20px; padding: 20px; }
  .panel { border: 2px solid #dcdfe0; background: #fff; }
  .span3 { grid-column: span 3; }
  .span5 { grid-column: span 5; }
  .span7 { grid-column: span 7; }
  .span9 { grid-column: span 9; }
  .panel-head { display: flex; align-items: center; gap: 14px; height: 76px; padding: 0 38px 0 30px; border-bottom: 2px solid #dcdfe0; background: #f4f4f4; }
  .panel-head h2 { padding-bottom: 2px; color: #7b8a8b; font-size: 26px; }
  .panel-head > .icon { height: 28px; margin-bottom: 8px; fill: #d3d7d8; }
  .pin { width: 18px; }
  .pie { width: 32px; }
  .line { width: 36px; }
  .panel-actions { display: flex; align-items: center; gap: 20px; margin-left: auto; padding-bottom: 2px; color: #444; }
  .pencil { width: 23px; height: 23px; }
  .times { width: 17px; height: 17px; }
  .vis { height: 734px; }
  .panel-foot { position: relative; display: flex; justify-content: center; height: 42px; border-top: 2px solid #ecf0f1; }
  .expand { display: grid; place-items: center; box-sizing: border-box; width: 100px; height: 38px; margin-top: -2px; border: 2px solid #ecf0f1; border-top: 0; border-radius: 0 0 8px 8px; background: #fff; }
  .chevron-up { width: 24px; height: 16px; fill: none; stroke: #333; stroke-width: 5; }
  .grip { position: absolute; right: 16px; bottom: 16px; width: 8px; height: 8px; border: solid #222; border-width: 0 4px 4px 0; }

  .map { position: relative; overflow: hidden; background: #f9fefe; }
  .world { width: 100%; height: 100%; }
  .land { fill: #fff; stroke: #c4c0c0; stroke-width: 2; stroke-linejoin: round; }
  .sea { fill: #f9fefe; stroke: #c4c0c0; stroke-width: 2; stroke-linejoin: round; }
  .lakes { fill: none; stroke: #cad9df; stroke-width: 3; stroke-linecap: round; }
  .islets { fill: none; stroke: #c8c6c6; stroke-width: 3; stroke-linecap: round; }
  .bubble { stroke-width: 2; fill-opacity: 0.8; }
  .tiny { stroke-width: 1; }
  .b0 { fill: #e8c450; stroke: #b0902a; }
  .b1 { fill: #feb24c; stroke: #b37c10; }
  .b2 { fill: #fd8d3c; stroke: #b55c0c; stroke-width: 3; }
  .b3 { fill: #f03b20; stroke: #a80d0d; stroke-width: 3; }
  .b4 { fill: #bd0026; stroke: #760018; stroke-width: 3; }
  .k0 { fill: #fed976; stroke: #b8a04a; }
  .k1 { fill: #feb24c; stroke: #b87c14; }
  .k2 { fill: #fd8d3c; stroke: #b85f14; }
  .k3 { fill: #f03b20; stroke: #a80d0d; }
  .k4 { fill: #bd0026; stroke: #840018; }
  .key { stroke-width: 2; }
  .controls { position: absolute; top: 22px; left: 22px; display: grid; gap: 20px; }
  .control { width: 52px; overflow: hidden; border-radius: 8px; background: #fff; box-shadow: 0 2px 10px rgba(0, 0, 0, 0.6); }
  .control button { display: grid; place-items: center; width: 52px; height: 52px; color: #000; }
  .control .off { border-top: 2px solid #ccc; background: #f4f4f4; }
  .control svg { width: 20px; height: 20px; fill: none; stroke: currentColor; stroke-width: 4; }
  .control .crop { width: 24px; height: 24px; stroke-width: 3; }
  .control .thin { stroke-width: 1; }
  .square { width: 20px; height: 20px; background: #464646; }
  .corner { position: absolute; right: 28px; bottom: 10px; display: grid; justify-items: end; gap: 18px; color: #444; font-size: 22px; }
  .bands { margin-right: 10px; padding: 9px 14px 11px; border-radius: 10px; background: rgba(255, 255, 255, 0.8); box-shadow: 0 0 30px rgba(0, 0, 0, 0.2); color: #666; }
  .bands li { display: flex; align-items: center; gap: 8px; line-height: 30px; }
  .bands svg { width: 20px; height: 20px; }
  .credit { line-height: 38px; }
  .credit a { color: #0078a8; }

  .metrics { display: flex; flex-wrap: wrap; justify-content: space-around; align-items: center; align-content: stretch; }
  .metric { display: flex; flex-direction: column; align-items: center; }
  .metric strong { padding-top: 8px; font-size: 160px; line-height: 216px; }

  .split { display: flex; }
  .pie-area { display: flex; flex: 1; align-items: center; min-width: 0; padding: 0 26px 0 11px; }
  .pie-area svg { flex: 1; min-width: 0; }
  .slice { stroke: #fff; stroke-width: 2; }
  .timeline { flex: 1; min-width: 0; height: 100%; }
  .legend-toggle { display: grid; flex: none; place-items: center; width: 28px; height: 60px; border-radius: 0 0 0 8px; background: #ecf0f1; }
  .legend-toggle svg { width: 12px; height: 18px; fill: none; stroke: #333; stroke-width: 4; }
  .legend { box-sizing: border-box; flex: none; width: 300px; padding: 0 0 0 6px; border-left: 2px solid #ecf0f1; color: #666; font-size: 24px; }
  .legend li { display: flex; align-items: center; gap: 7px; padding-bottom: 2px; line-height: 36px; }
  .legend svg { width: 20px; height: 20px; }
  .legend span { overflow: hidden; min-width: 0; white-space: nowrap; text-overflow: ellipsis; }
  .axis { stroke: #ddd; stroke-width: 2; }
  .series { fill: none; stroke: #57c17b; stroke-width: 4; stroke-linejoin: round; }
  .tick { fill: #848e96; font-size: 22px; text-anchor: middle; }
  .end { text-anchor: end; }
  .axis-title { fill: #848e96; font-size: 24px; font-weight: 700; text-anchor: middle; }
</style>
